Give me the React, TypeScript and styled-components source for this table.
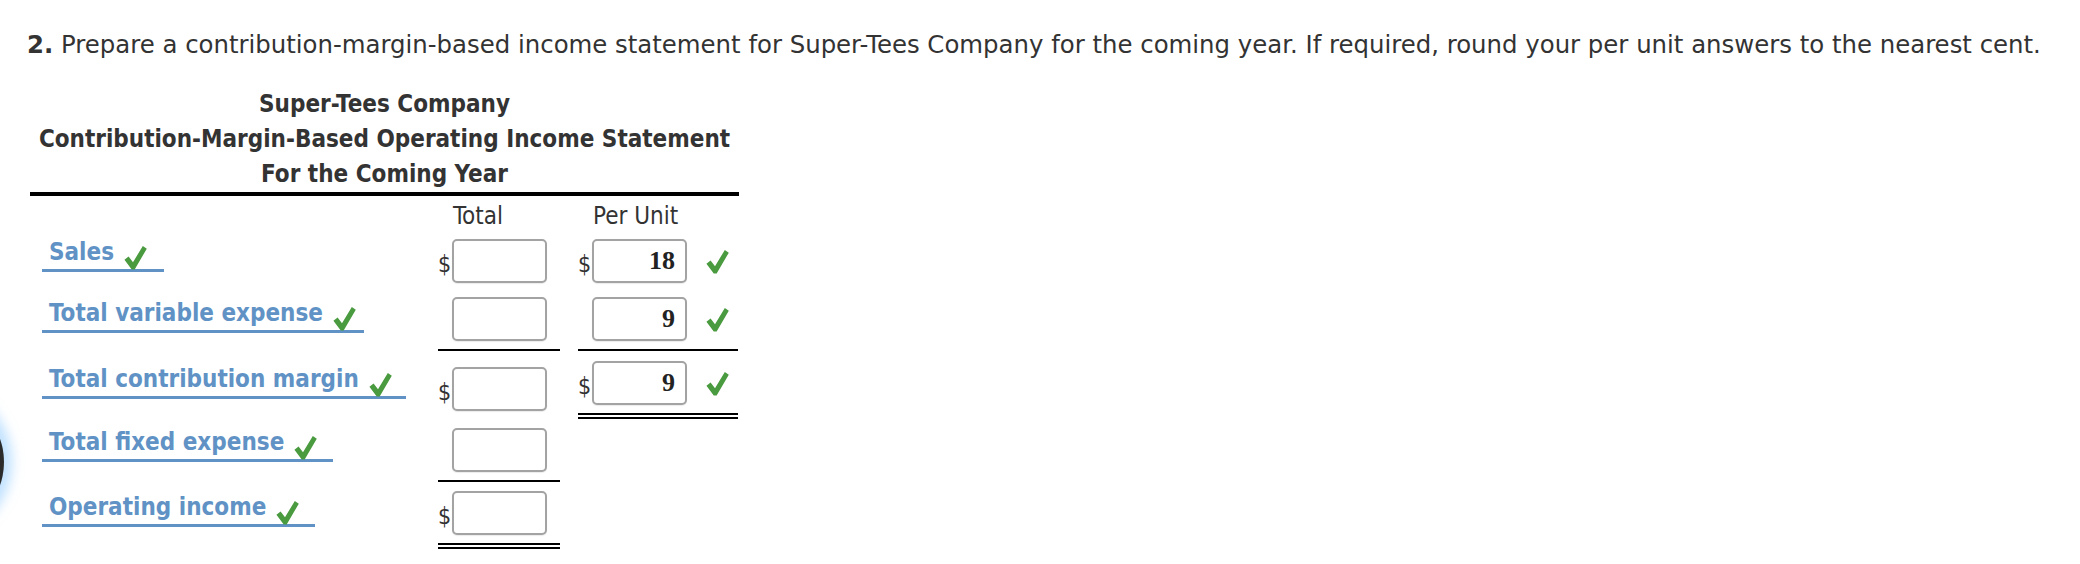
import React from 'react';
import styled, { createGlobalStyle } from 'styled-components';

const GlobalStyle = createGlobalStyle`
  html, body {
    margin: 0;
    padding: 0;
    background: #ffffff;
    overflow: hidden;
  }
`;

const Page = styled.div`
  position: relative;
  width: 2080px;
  height: 564px;
  padding: 30px 0 0 27px;
  box-sizing: border-box;
  color: #333333;
`;

const Question = styled.p`
  margin: 0;
  font-family: 'DejaVu Sans', Verdana, sans-serif;
  font-size: 24.4px;
  line-height: 30px;
  white-space: nowrap;

  b {
    font-weight: bold;
  }
`;

const Statement = styled.div`
  width: 709px;
  margin: 27px 0 0 3px;
  font-family: 'DejaVu Sans Condensed', 'Liberation Sans', sans-serif;
`;

const Title = styled.div`
  text-align: center;
  font-weight: bold;
  font-size: 24px;
  line-height: 35px;
  border-bottom: 4px solid #000000;
  white-space: nowrap;
`;

const Row = styled.div<{ $h: number }>`
  display: grid;
  grid-template-columns: 408px 122px 18px 160px;
  align-items: start;
  height: ${p => p.$h}px;
`;

const HeadCell = styled.div<{ $pad: number }>`
  font-size: 24px;
  line-height: 28px;
  padding-top: 6px;
  padding-left: ${p => p.$pad}px;
  white-space: nowrap;
`;

const LabelCell = styled.div<{ $top: number }>`
  margin-top: ${p => p.$top}px;
  padding-left: 12px;
`;

const Label = styled.span<{ $tail: number }>`
  display: inline-flex;
  align-items: flex-end;
  gap: 10px;
  padding: 0 ${p => p.$tail}px 1px 7px;
  border-bottom: 3px solid #6092c5;
  color: #6092c5;
  font-weight: bold;
  font-size: 24px;
  line-height: 32px;
  white-space: nowrap;

  svg {
    margin-bottom: -2px;
  }
`;

const Amount = styled.div<{ $top: number }>`
  margin-top: ${p => p.$top}px;
  display: flex;
  flex-direction: column;
`;

const Line = styled.div`
  display: flex;
  align-items: center;
`;

const Dollar = styled.span<{ $show: boolean }>`
  width: 14px;
  font-size: 23px;
  line-height: 26px;
  visibility: ${p => (p.$show ? 'visible' : 'hidden')};
  padding-top: 6px;
`;

const Box = styled.div`
  width: 95px;
  height: 44px;
  box-sizing: border-box;
  border: 2px solid #a3a3a3;
  border-radius: 5px;
  background: #ffffff;
  box-shadow: 0 1px 1px rgba(0, 0, 0, 0.08);
  padding-right: 10px;
  display: flex;
  align-items: center;
  justify-content: flex-end;
  font-family: 'Liberation Serif', 'Times New Roman', serif;
  font-weight: bold;
  font-size: 26px;
  color: #222222;
`;

const Rule = styled.div<{ $double?: boolean }>`
  margin-top: 8px;
  height: ${p => (p.$double ? 6 : 2)}px;
  box-sizing: border-box;
  border-top: 2px solid #000000;
  border-bottom: ${p => (p.$double ? '2px solid #000000' : 'none')};
`;

const CheckWrap = styled.span`
  display: inline-flex;
  margin-left: 19px;
  padding-top: 2px;
`;

const Orb = styled.div`
  position: absolute;
  left: -136px;
  top: 392px;
  width: 140px;
  height: 140px;
  border-radius: 50%;
  background: #2b2b2b;
  box-shadow: 0 0 12px 8px rgba(140, 200, 255, 0.55);
`;

const Check: React.FC<{ size?: number }> = ({ size = 23 }) => (
  <svg width={size} height={size * 1.1} viewBox="0 0 22 24" aria-hidden="true">
    <path
      d="M0.4 14 L4.4 10.8 L8.6 16.4 L18 0.8 L21.8 3.4 L10.2 23.4 L7.4 23.4 Z"
      fill="#4a9a3f"
    />
  </svg>
);

type Cell = { dollar: boolean; value?: string; top: number; rule?: 'single' | 'double'; check?: boolean } | null;

type RowData = {
  label: string;
  tail: number;
  labelTop: number;
  h: number;
  total: Cell;
  unit: Cell;
};

const rows: RowData[] = [
  {
    label: 'Sales', tail: 17, labelTop: 3, h: 57,
    total: { dollar: true, top: 6 },
    unit: { dollar: true, value: '18', top: 6, check: true },
  },
  {
    label: 'Total variable expense', tail: 8, labelTop: 7, h: 65,
    total: { dollar: false, top: 7, rule: 'single' },
    unit: { dollar: false, value: '9', top: 7, rule: 'single', check: true },
  },
  {
    label: 'Total contribution margin', tail: 14, labelTop: 8, h: 67,
    total: { dollar: true, top: 12 },
    unit: { dollar: true, value: '9', top: 6, rule: 'double', check: true },
  },
  {
    label: 'Total fixed expense', tail: 16, labelTop: 4, h: 63,
    total: { dollar: false, top: 6, rule: 'single' },
    unit: null,
  },
  {
    label: 'Operating income', tail: 16, labelTop: 6, h: 65,
    total: { dollar: true, top: 6, rule: 'double' },
    unit: null,
  },
];

const AmountCell: React.FC<{ cell: Cell }> = ({ cell }) => {
  if (!cell) return <div />;
  return (
    <Amount $top={cell.top}>
      <Line>
        <Dollar $show={cell.dollar}>$</Dollar>
        <Box>{cell.value}</Box>
        {cell.check && (
          <CheckWrap>
            <Check />
          </CheckWrap>
        )}
      </Line>
      {cell.rule && <Rule $double={cell.rule === 'double'} />}
    </Amount>
  );
};

export default function App() {
  return (
    <>
      <GlobalStyle />
      <Page>
        <Orb />
        <Question>
          <b>2.</b> Prepare a contribution-margin-based income statement for Super-Tees Company for the coming year. If required, round your per unit answers to the nearest cent.
        </Question>
        <Statement>
          <Title>
            Super-Tees Company
            <br />
            Contribution-Margin-Based Operating Income Statement
            <br />
            For the Coming Year
          </Title>
          <Row $h={37}>
            <div />
            <HeadCell $pad={15}>Total</HeadCell>
            <div />
            <HeadCell $pad={15}>Per Unit</HeadCell>
          </Row>
          {rows.map(r => (
            <Row key={r.label} $h={r.h}>
              <LabelCell $top={r.labelTop}>
                <Label $tail={r.tail}>
                  {r.label}
                  <Check size={23} />
                </Label>
              </LabelCell>
              <AmountCell cell={r.total} />
              <div />
              <AmountCell cell={r.unit} />
            </Row>
          ))}
        </Statement>
      </Page>
    </>
  );
}
